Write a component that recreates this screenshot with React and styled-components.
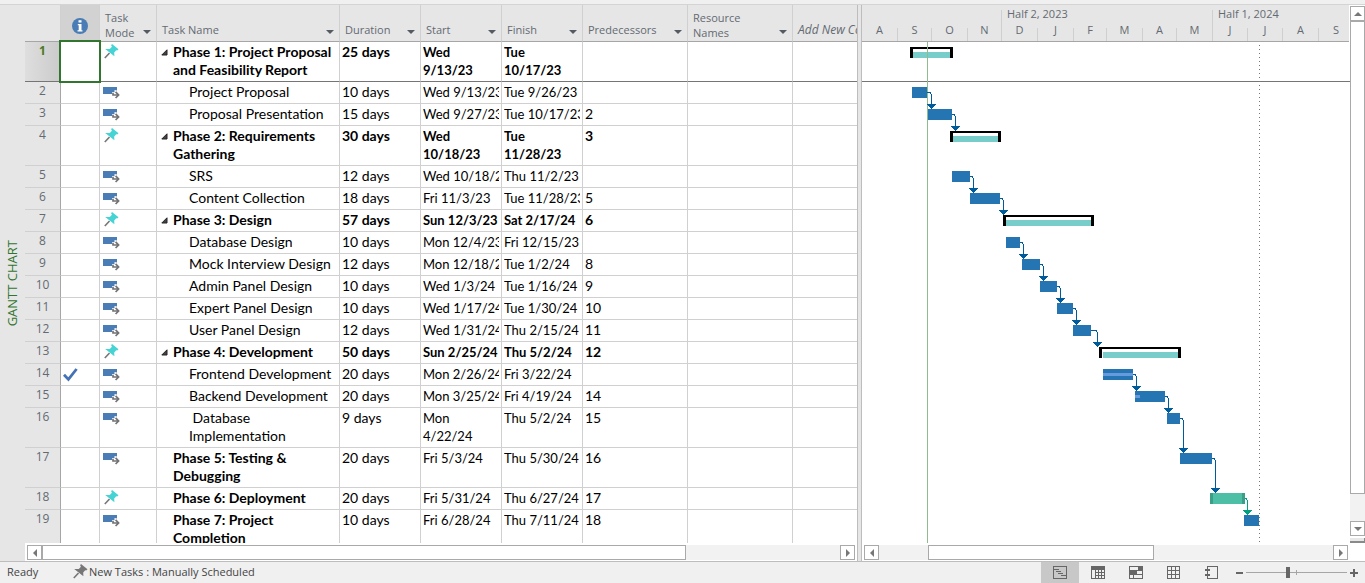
import React from "react";
import styled, { createGlobalStyle, css } from "styled-components";

const UI_FONT = '"Open Sans", "Noto Sans", sans-serif';
const GRID_FONT = 'Lato, "Open Sans", sans-serif';

const color = {
  chrome: "#e6e6e6",
  status: "#f0f0f0",
  line: "#d0d0d0",
  strong: "#a6a6a6",
  label: "#646a72",
  green: "#31752f",
  bar: "#2475b2",
  link: "#005b9a",
  teal: "#78cdcb",
};

const Global = createGlobalStyle`
  * { box-sizing: border-box; }
  body { margin: 0; background: #fff; }
  button { font: inherit; border: 0; padding: 0; margin: 0; background: none; }
`;

/* ---------- data ---------- */

const columns = [
  { key: "info", width: 39, icon: true },
  { key: "mode", label: "Task\nMode", width: 57, menu: true },
  { key: "name", label: "Task Name", width: 183, menu: true },
  { key: "duration", label: "Duration", width: 81, menu: true },
  { key: "start", label: "Start", width: 81, menu: true },
  { key: "finish", label: "Finish", width: 81, menu: true },
  { key: "pred", label: "Predecessors", width: 105, menu: true },
  { key: "resource", label: "Resource\nNames", width: 105, menu: true },
  { key: "add", label: "Add New Column", italic: true },
];

const tasks = [
  { id: 1, kind: "phase", pin: true, tall: true, selected: true, name: "Phase 1: Project Proposal\nand Feasibility Report", duration: "25 days", start: "Wed\n9/13/23", finish: "Tue\n10/17/23", bar: [48, 91] },
  { id: 2, name: "Project Proposal", duration: "10 days", start: "Wed 9/13/23", finish: "Tue 9/26/23", bar: [50, 65], link: 69 },
  { id: 3, name: "Proposal Presentation", duration: "15 days", start: "Wed 9/27/23", finish: "Tue 10/17/23", pred: "2", bar: [66, 90], link: 93 },
  { id: 4, kind: "phase", pin: true, tall: true, name: "Phase 2: Requirements\nGathering", duration: "30 days", start: "Wed\n10/18/23", finish: "Tue\n11/28/23", pred: "3", bar: [88, 139] },
  { id: 5, name: "SRS", duration: "12 days", start: "Wed 10/18/23", finish: "Thu 11/2/23", bar: [90, 108], link: 111 },
  { id: 6, name: "Content Collection", duration: "18 days", start: "Fri 11/3/23", finish: "Tue 11/28/23", pred: "5", bar: [108, 138], link: 141 },
  { id: 7, kind: "phase", pin: true, name: "Phase 3: Design", duration: "57 days", start: "Sun 12/3/23", finish: "Sat 2/17/24", pred: "6", bar: [141, 232] },
  { id: 8, name: "Database Design", duration: "10 days", start: "Mon 12/4/23", finish: "Fri 12/15/23", bar: [144, 158], link: 161 },
  { id: 9, name: "Mock Interview Design", duration: "12 days", start: "Mon 12/18/23", finish: "Tue 1/2/24", pred: "8", bar: [160, 178], link: 181 },
  { id: 10, name: "Admin Panel Design", duration: "10 days", start: "Wed 1/3/24", finish: "Tue 1/16/24", pred: "9", bar: [178, 195], link: 198 },
  { id: 11, name: "Expert Panel Design", duration: "10 days", start: "Wed 1/17/24", finish: "Tue 1/30/24", pred: "10", bar: [195, 211], link: 214 },
  { id: 12, name: "User Panel Design", duration: "12 days", start: "Wed 1/31/24", finish: "Thu 2/15/24", pred: "11", bar: [211, 229], link: 235 },
  { id: 13, kind: "phase", pin: true, name: "Phase 4: Development", duration: "50 days", start: "Sun 2/25/24", finish: "Thu 5/2/24", pred: "12", bar: [237, 319], inset: 1 },
  { id: 14, done: true, name: "Frontend Development", duration: "20 days", start: "Mon 2/26/24", finish: "Fri 3/22/24", bar: [241, 271], progress: 30, link: 274 },
  { id: 15, name: "Backend Development", duration: "20 days", start: "Mon 3/25/24", finish: "Fri 4/19/24", pred: "14", bar: [273, 303], progress: 5, link: 306 },
  { id: 16, tall: true, name: " Database\nImplementation", duration: "9 days", start: "Mon\n4/22/24", finish: "Thu 5/2/24", pred: "15", bar: [305, 318], link: 321 },
  { id: 17, kind: "top", tall: true, name: "Phase 5: Testing &\nDebugging", duration: "20 days", start: "Fri 5/3/24", finish: "Thu 5/30/24", pred: "16", bar: [318, 350], link: 353 },
  { id: 18, kind: "top", pin: true, name: "Phase 6: Deployment", duration: "20 days", start: "Fri 5/31/24", finish: "Thu 6/27/24", pred: "17", bar: [348, 383], manual: true, link: 385 },
  { id: 19, kind: "top", tall: true, name: "Phase 7: Project\nCompletion", duration: "10 days", start: "Fri 6/28/24", finish: "Thu 7/11/24", pred: "18", bar: [382, 397] },
];

const halves = [
  { label: "", width: 140 },
  { label: "Half 2, 2023", width: 211 },
  { label: "Half 1, 2024" },
];

const months = [
  ["A", 36], ["S", 34], ["O", 36], ["N", 34], ["D", 36], ["J", 36], ["F", 33],
  ["M", 36], ["A", 34], ["M", 36], ["J", 35], ["J", 35], ["A", 36], ["S", 34],
];

/* ---------- shell ---------- */

const Window = styled.div`
  height: 100vh;
  display: flex;
  flex-direction: column;
  overflow: hidden;
  font: 11px/15px ${UI_FONT};
  color: #444;
`;

const RibbonEdge = styled.div`
  flex: none;
  height: 5px;
  background: ${color.status};
  border-bottom: 1px solid #d4d4d4;
`;

const Workspace = styled.main`
  flex: 1;
  min-height: 0;
  display: flex;
`;

const ViewStrip = styled.div`
  flex: none;
  width: 25px;
  display: flex;
  align-items: center;
  justify-content: center;
  background: ${color.chrome};
  color: ${color.green};
  font-size: 13px;
`;

const ViewName = styled.span`
  writing-mode: vertical-rl;
  transform: rotate(180deg);
  white-space: nowrap;
`;

const TablePane = styled.section`
  flex: none;
  width: 832px;
  display: flex;
  flex-direction: column;
`;

const ChartPane = styled.section`
  flex: 1;
  min-width: 0;
  display: flex;
  flex-direction: column;
`;

const Viewport = styled.div`
  flex: 1;
  min-height: 0;
  overflow: hidden;
`;

const Splitter = styled.div`
  flex: none;
  width: 5px;
  background: ${color.chrome};
  border: solid #bdbdbd;
  border-width: 0 1px;
`;

/* ---------- task table ---------- */

const TaskTable = styled.table`
  width: 100%;
  table-layout: fixed;
  border-collapse: separate;
  border-spacing: 0;
`;

const HeadCell = styled.th`
  height: 37px;
  padding: 0;
  vertical-align: bottom;
  text-align: left;
  font-weight: 400;
  font-style: ${(p) => (p.$italic ? "italic" : "normal")};
  font-size: ${(p) => (p.$italic ? 12 : 11)}px;
  color: ${color.label};
  background: ${(p) => (p.$active ? "#d2d2d2" : color.chrome)};
  border-right: 1px solid ${color.line};
  border-bottom: 1px solid ${color.strong};
  &:last-child { border-right: 0; }
`;

const HeadContent = styled.div`
  display: flex;
  align-items: flex-end;
  justify-content: space-between;
  height: 36px;
  padding: 0 5px;
  overflow: hidden;
`;

const HeadLabel = styled.span`
  white-space: pre;
  padding-bottom: ${(p) => (p.$double ? 1 : 4)}px;
`;

const MenuButton = styled.button`
  flex: none;
  display: flex;
  padding-bottom: 7px;
`;

const InfoHead = styled.div`
  display: flex;
  justify-content: center;
  padding-bottom: 7px;
`;

const BodyRow = styled.tr`
  height: ${(p) => (p.$tall ? 40 : 22)}px;
  td, th { border-bottom-color: ${(p) => (p.$selected ? "#757575" : color.line)}; }
`;

const RowNumber = styled.th`
  padding: 0;
  vertical-align: top;
  text-align: center;
  font: 12px/18px ${UI_FONT};
  font-weight: ${(p) => (p.$selected ? 700 : 400)};
  color: ${(p) => (p.$selected ? "#4b7a22" : color.label)};
  background: ${(p) => (p.$selected ? "linear-gradient(90deg, #dedede, #cbcbcb)" : color.chrome)};
  border-right: 1px solid ${color.strong};
  border-bottom: 1px solid ${color.line};
`;

const Cell = styled.td`
  position: relative;
  padding: 1px 2px 0;
  vertical-align: top;
  font: 14px/18px ${GRID_FONT};
  font-size: ${(p) => (p.$date ? 13 : 14)}px;
  font-weight: ${(p) => (p.$bold ? 700 : 400)};
  color: #000;
  border-right: 1px solid ${color.line};
  border-bottom: 1px solid ${color.line};
  &:last-child { border-right: 0; }
`;

const CellText = styled.div`
  overflow: hidden;
  white-space: pre;
`;

const NameText = styled.div`
  display: flex;
  padding-left: ${(p) => (p.$indent ? 30 : 2)}px;
  white-space: pre;
  overflow: hidden;
`;

const Toggle = styled.button`
  flex: none;
  width: 12px;
  height: 18px;
  display: flex;
  align-items: center;
`;

const Selection = styled.span`
  position: absolute;
  inset: -2px;
  z-index: 1;
  border: 2px solid ${color.green};
`;

const IconBox = styled.div`
  display: flex;
  padding-left: ${(p) => (p.$pin ? 2 : 1)}px;
  padding-top: ${(p) => (p.$pin ? 1 : 4)}px;
`;

const CheckBox = styled.div`
  display: flex;
  padding-top: 3px;
`;

/* ---------- timeline ---------- */

const Timeline = styled.div`
  flex: none;
  height: 37px;
  margin-right: 1px;
  display: flex;
  flex-direction: column;
  justify-content: flex-end;
  overflow: hidden;
  color: ${color.label};
  background: ${color.chrome};
  border-bottom: 1px solid ${color.strong};
`;

const HalfRow = styled.div`
  display: flex;
  height: 18px;
  flex: none;
`;

const Half = styled.div`
  flex: ${(p) => (p.$width ? "none" : 1)};
  width: ${(p) => p.$width || 0}px;
  padding-left: 5px;
  white-space: nowrap;
  line-height: 7px;
  border-right: ${(p) => (p.$width ? "1px solid #cfcfcf" : "0")};
`;

const MonthRow = styled.div`
  display: flex;
  height: 13px;
  flex: none;
`;

const Month = styled.div`
  flex: none;
  width: ${(p) => p.$width}px;
  text-align: center;
  line-height: 3px;
  border-right: 1px solid #cfcfcf;
  &:last-child { border-right: 0; }
`;

const Chart = styled.svg`
  display: block;
  width: 100%;
  height: 520px;
  shape-rendering: crispEdges;
`;

/* ---------- scrollbars ---------- */

const HScroll = styled.div`
  flex: none;
  display: flex;
  height: 18px;
  padding: 2px 2px 1px;
  background: #fff;
`;

const VScroll = styled.div`
  flex: none;
  width: 15px;
  display: flex;
  flex-direction: column;
  padding: 1px 0 18px;
`;

const ScrollButton = styled.button`
  flex: none;
  width: 15px;
  height: 15px;
  display: flex;
  align-items: center;
  justify-content: center;
  background: #fff;
  border: 1px solid #a9a9a9;
`;

const Track = styled.div`
  flex: ${(p) => (p.$size ? "none" : 1)};
  ${(p) => p.$size && css`width: ${p.$size}px;`}
  background: #f2f2f2;
`;

const Thumb = styled.div`
  flex: none;
  width: ${(p) => p.$size}px;
  background: #fff;
  border: 1px solid #a9a9a9;
`;

const VThumb = styled.div`
  flex: 1;
  background: #fff;
  border: 1px solid #a9a9a9;
`;

const VTrack = styled.div`
  flex: none;
  height: 27px;
  background: #f2f2f2;
`;

const SplitHandle = styled.div`
  flex: none;
  height: 5px;
  margin-top: 2px;
  background: #e8e8e8;
  border: 1px solid #8a8a8a;
  border-width: 0 1px 2px 0;
`;

/* ---------- status bar ---------- */

const StatusBar = styled.footer`
  flex: none;
  height: 22px;
  display: flex;
  align-items: center;
  background: ${color.status};
  border-top: 1px solid #bdbdbd;
`;

const StatusText = styled.span`
  width: 67px;
  padding: 0 0 2px 7px;
`;

const NewTasks = styled.button`
  display: flex;
  align-items: center;
  gap: 1px;
  padding: 0 0 2px 6px;
  color: #444;
`;

const ViewButtons = styled.div`
  margin-left: auto;
  display: flex;
  align-self: stretch;
`;

const ViewButton = styled.button`
  width: 38px;
  display: flex;
  align-items: center;
  justify-content: center;
  padding-bottom: 1px;
  background: ${(p) => (p.$active ? "#c8c8c8" : "transparent")};
`;

const ZoomGroup = styled.div`
  display: flex;
  align-items: center;
  padding: 0 7px 0 4px;
  gap: 2px;
`;

const ZoomButton = styled.button`
  width: 9px;
  height: 21px;
  display: flex;
  align-items: center;
  justify-content: center;
`;

const ZoomSlider = styled.input`
  appearance: none;
  width: 101px;
  height: 13px;
  margin: 0;
  background:
    linear-gradient(#a6a6a6, #a6a6a6) 50px 4px / 1px 5px no-repeat,
    linear-gradient(#a6a6a6, #a6a6a6) 0 6px / 100% 1px no-repeat;
  &::-webkit-slider-thumb {
    appearance: none;
    width: 4px;
    height: 11px;
    background: #666;
  }
`;

/* ---------- icons ---------- */

const PinIcon = ({ fill = "#45d3d3" }) => (
  <svg width="15" height="15" viewBox="0 0 15 15" aria-hidden="true">
    <path d="M5.5 9 .8 14" stroke="#777" strokeWidth="1.6" />
    <path d="M8 0 14.5 5.2 13.2 6.4 12.2 6.3 10.2 8.4 10.4 12.3 1.2 5 5.8 4.9 7.9 2.7 7.1 1.2z" fill={fill} />
  </svg>
);

const AutoIcon = () => (
  <svg width="17" height="12" viewBox="0 0 17 12" aria-hidden="true">
    <path d="M0 0h14v3.5L11.5 3v2.2H9V7H0z" fill="#4a7db5" />
    <path d="M10 6v2h5M12.6 4.8 15.6 8l-3 3" fill="none" stroke="#737373" strokeWidth="1.7" />
  </svg>
);

const InfoIcon = () => (
  <svg width="16" height="16" viewBox="0 0 16 16" aria-label="Indicators">
    <circle cx="8" cy="8" r="8" fill="#4a7db5" />
    <path d="M6.5 2.2h3v2.4h-3zM5.8 6h3.7v6.2h1V13.4h-5v-1.2h1.2V7.2h-.9z" fill="#fff" />
  </svg>
);

const CheckIcon = () => (
  <svg width="15" height="14" viewBox="0 0 15 14" aria-label="Complete">
    <path d="M1 6.8 5.4 11.4 13.6 1" fill="none" stroke="#4472b4" strokeWidth="2.8" />
  </svg>
);

const tri = {
  down: "M0 2h8L4 6z",
  up: "M0 6h8L4 2z",
  left: "M6 0v8L2 4z",
  right: "M2 0v8l4-4z",
};

const Triangle = ({ dir, fill = "#777" }) => (
  <svg width="8" height="8" viewBox="0 0 8 8" aria-hidden="true">
    <path d={tri[dir]} fill={fill} />
  </svg>
);

const MenuArrow = () => (
  <svg width="8" height="4" viewBox="0 0 8 4" aria-hidden="true">
    <path d="M0 0h8L4 4z" fill="#555b63" />
  </svg>
);

const viewIcons = [
  ["Gantt Chart", <path key="p" d="M.5.5h13v12H.5zM1 3.5h5M3 5.5h5M5 7.5h5M8 9.5h5" fill="none" stroke="#666" />],
  ["Task Usage", <g key="p"><path d="M.5.5h13v12H.5z" fill="none" stroke="#666" /><path d="M0 0h14v4H0z" fill="#666" /><path d="M4.5 4v9M7.5 4v9M10.5 4v9M4 6.5h10M4 9.5h10" stroke="#666" /></g>],
  ["Team Planner", <g key="p"><path d="M.5.5h13v12H.5zM0 4.5h14M0 8.5h14M4.5 9v4" fill="none" stroke="#666" /><path d="M9 0h5v4H9zM0 4h8v5H0z" fill="#666" /></g>],
  ["Resource Sheet", <path key="p" d="M.5.5h12v12H.5zM4.5 0v13M8.5 0v13M0 4.5h13M0 8.5h13" fill="none" stroke="#666" />],
  ["Report", <g key="p"><path d="M2.5 3V.5h10v12h-10V10M2.5 5v3" fill="none" stroke="#666" /><path d="M0 3h5v2H0zM0 8h5v2H0z" fill="#666" /></g>],
];

/* ---------- parts ---------- */

function TaskRow({ task }) {
  const phase = task.kind === "phase";
  const summary = Boolean(task.kind);
  return (
    <BodyRow $tall={task.tall} $selected={task.selected}>
      <RowNumber scope="row" $selected={task.selected}>{task.id}</RowNumber>
      <Cell>
        {task.selected && <Selection />}
        {task.done && <CheckBox><CheckIcon /></CheckBox>}
      </Cell>
      <Cell>
        <IconBox $pin={task.pin}>{task.pin ? <PinIcon /> : <AutoIcon />}</IconBox>
      </Cell>
      <Cell $bold={summary}>
        <NameText $indent={!summary}>
          {summary && (
            <Toggle as={phase ? "button" : "span"} aria-label={phase ? "Collapse" : undefined}>
              {phase && (
                <svg width="7" height="7" viewBox="0 0 7 7" aria-hidden="true">
                  <path d="M6 .8V6H.8z" fill="#444" stroke="#222" />
                </svg>
              )}
            </Toggle>
          )}
          <span>{task.name}</span>
        </NameText>
      </Cell>
      {["duration", "start", "finish", "pred", "resource", "add"].map((key) => (
        <Cell key={key} $bold={phase} $date={key === "start" || key === "finish"}>
          <CellText>{task[key]}</CellText>
        </Cell>
      ))}
    </BodyRow>
  );
}

function Bar({ task, top }) {
  const [from, to] = task.bar;
  const width = to - from;
  if (task.kind === "phase") {
    const inset = 3 + (task.inset || 0);
    return (
      <g>
        <path d={`M${from} ${top + 11}v-11h${width}v11h-3v-9h${6 - width}v9z`} fill="#000" />
        <rect x={from + inset} y={top + 5} width={width - inset - 3} height="6" fill={color.teal} />
      </g>
    );
  }
  return (
    <g>
      <rect x={from} y={top} width={width} height="11" fill={task.manual ? "#3a9e88" : color.bar} />
      {task.manual && <rect x={from + 3} y={top} width={width - 6} height="11" fill="#4cbfa6" />}
      {task.progress && <rect x={from} y={top + 4} width={task.progress} height="3" fill="#669ade" />}
    </g>
  );
}

function Link({ task, top, tip }) {
  const x = task.link;
  const stroke = task.manual ? "#00a080" : color.link;
  return (
    <g>
      <path d={`M${task.bar[1]} ${top + 5.5}H${x - 1}l1.5 2V${tip - 4}`} fill="none" stroke={stroke} />
      <path d={`M${x - 4} ${tip - 5}h9l-4 5h-1z`} fill={stroke} />
    </g>
  );
}

function GanttChart() {
  let y = 0;
  const placed = tasks.map((task) => {
    const top = y + 5;
    y += task.tall ? 40 : 22;
    return { task, top };
  });
  return (
    <Chart role="img" aria-label="Gantt chart">
      <line x1="0" x2="100%" y1="39.5" y2="39.5" stroke="#757575" />
      <line x1="397.5" x2="397.5" y1="3" y2="501" stroke="#777" strokeDasharray="1 3" />
      {placed.map(({ task, top }) => <Bar key={task.id} task={task} top={top} />)}
      <line x1="65.5" x2="65.5" y1="0" y2="520" stroke="#8fbc8f" />
      {placed.map(({ task, top }, i) =>
        task.link ? <Link key={task.id} task={task} top={top} tip={placed[i + 1].top} /> : null
      )}
    </Chart>
  );
}

export default function App() {
  return (
    <>
      <Global />
      <Window>
        <RibbonEdge />
        <Workspace>
          <ViewStrip><ViewName>GANTT CHART</ViewName></ViewStrip>
          <TablePane>
            <Viewport>
              <TaskTable>
                <colgroup>
                  <col width="36" />
                  {columns.map((c) => <col key={c.key} width={c.width} />)}
                </colgroup>
                <thead>
                  <tr>
                    <HeadCell aria-label="Row" />
                    {columns.map((c) => (
                      <HeadCell key={c.key} scope="col" $active={c.icon} $italic={c.italic}>
                        {c.icon ? (
                          <InfoHead><InfoIcon /></InfoHead>
                        ) : (
                          <HeadContent>
                            <HeadLabel $double={c.label.includes("\n")}>{c.label}</HeadLabel>
                            {c.menu && <MenuButton aria-label="Column menu"><MenuArrow /></MenuButton>}
                          </HeadContent>
                        )}
                      </HeadCell>
                    ))}
                  </tr>
                </thead>
                <tbody>
                  {tasks.map((t) => <TaskRow key={t.id} task={t} />)}
                </tbody>
              </TaskTable>
            </Viewport>
            <HScroll>
              <ScrollButton aria-label="Scroll left"><Triangle dir="left" /></ScrollButton>
              <Thumb $size={644} />
              <Track />
              <ScrollButton aria-label="Scroll right"><Triangle dir="right" /></ScrollButton>
            </HScroll>
          </TablePane>
          <Splitter />
          <ChartPane>
            <Timeline>
              <HalfRow>
                {halves.map((h) => <Half key={h.label} $width={h.width}>{h.label}</Half>)}
              </HalfRow>
              <MonthRow>
                {months.map(([label, width], i) => <Month key={i} $width={width}>{label}</Month>)}
              </MonthRow>
            </Timeline>
            <Viewport><GanttChart /></Viewport>
            <HScroll>
              <ScrollButton aria-label="Scroll left"><Triangle dir="left" /></ScrollButton>
              <Track $size={49} />
              <Thumb $size={226} />
              <Track />
              <ScrollButton aria-label="Scroll right"><Triangle dir="right" /></ScrollButton>
            </HScroll>
          </ChartPane>
          <VScroll>
            <ScrollButton aria-label="Scroll up"><Triangle dir="up" /></ScrollButton>
            <VThumb />
            <VTrack />
            <ScrollButton aria-label="Scroll down"><Triangle dir="down" /></ScrollButton>
            <SplitHandle />
          </VScroll>
        </Workspace>
        <StatusBar>
          <StatusText>Ready</StatusText>
          <NewTasks>
            <PinIcon fill="#777" />
            New Tasks : Manually Scheduled
          </NewTasks>
          <ViewButtons>
            {viewIcons.map(([label, art], i) => (
              <ViewButton key={label} aria-label={label} $active={i === 0}>
                <svg width="14" height="13" viewBox="0 0 14 13" shapeRendering="crispEdges">{art}</svg>
              </ViewButton>
            ))}
          </ViewButtons>
          <ZoomGroup>
            <ZoomButton aria-label="Zoom out">
              <svg width="7" height="2"><path d="M0 0h7v2H0z" fill="#666" /></svg>
            </ZoomButton>
            <ZoomSlider type="range" aria-label="Zoom" min="0" max="100" defaultValue="41" />
            <ZoomButton aria-label="Zoom in">
              <svg width="8" height="8"><path d="M3 0h2v3h3v2H5v3H3V5H0V3h3z" fill="#666" /></svg>
            </ZoomButton>
          </ZoomGroup>
        </StatusBar>
      </Window>
    </>
  );
}
